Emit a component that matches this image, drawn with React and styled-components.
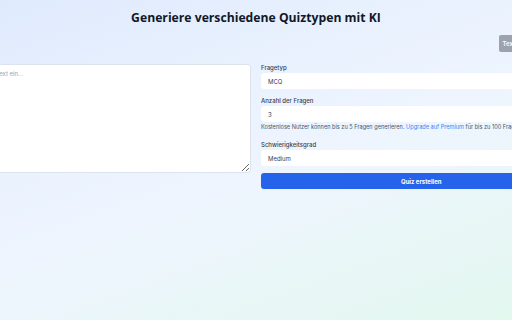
import React, {useState} from 'react';
import styled, {createGlobalStyle} from 'styled-components';

const GlobalStyle = createGlobalStyle`
    html, body {
        margin:0;
        padding:0;
    }
    body {
        font-family: Inter, "Noto Sans", sans-serif;
        overflow:hidden;
    }
`;

const Page = styled.div`
    min-height:320px;
    display:flex;
    justify-content:center;
    background: linear-gradient(160deg, #dfeafd 0%, #eaf2fe 35%, #eef5fe 55%, #e3f8ef 100%);
`;

const Container = styled.div`
    flex:0 0 651px;
    width:651px;
    display:flex;
    flex-direction:column;
    padding-top:8px;
    box-sizing:border-box;
`;

const Title = styled.h1`
    margin:0;
    text-align:center;
    font-family: "Open Sans", sans-serif;
    font-weight:700;
    font-size:12.2px;
    line-height:20px;
    color:#111827;
`;

const Toolbar = styled.div`
    display:flex;
    justify-content:flex-end;
    margin-top:7px;
`;

const GrayButton = styled.button`
    height:17px;
    width:83px;
    border:none;
    border-radius:2px;
    background:#9ca3af;
    color:#fff;
    font-family:Inter, sans-serif;
    font-weight:600;
    font-size:6px;
    padding:0 4px;
    text-align:left;
    cursor:pointer;
`;

const Columns = styled.div`
    display:grid;
    grid-template-columns:1fr 1fr;
    gap:10px;
    margin-top:12px;
    align-items:start;
`;

const TextArea = styled.textarea`
    width:100%;
    height:109px;
    box-sizing:border-box;
    border:1px solid #dde3ec;
    border-radius:3px;
    background:#fff;
    padding:5px 6px;
    font-family:Inter, sans-serif;
    font-size:6px;
    color:#374151;
    resize:vertical;
    outline:none;
    &::placeholder {
        color:#9ca3af;
    }
`;

const Form = styled.div`
    display:flex;
    flex-direction:column;
`;

const Field = styled.div`
    display:flex;
    flex-direction:column;
    margin-top:${props=>props.$top ?? 0}px;
    margin-bottom:${props=>props.$gap ?? 8}px;
`;

const Label = styled.label`
    font-size:6px;
    line-height:8px;
    font-weight:500;
    color:#374151;
    margin-bottom:1px;
`;

const Select = styled.div`
    height:16px;
    display:flex;
    align-items:center;
    padding:0 7px;
    background:#fff;
    border-radius:3px;
    font-size:6px;
    color:#374151;
`;

const Hint = styled.p`
    margin:1px 0 0;
    font-size:5.6px;
    line-height:8px;
    color:#4b5563;
    white-space:nowrap;
    a {
        color:#3b82f6;
        text-decoration:none;
    }
`;

const SubmitButton = styled.button`
    height:16px;
    border:none;
    border-radius:3px;
    background:#2563eb;
    color:#fff;
    font-family:Inter, sans-serif;
    font-weight:700;
    font-size:6px;
    cursor:pointer;
`;

const App = ()=>{
    const [text, setText] = useState("");

    return <Page>
        <GlobalStyle/>
        <Container>
            <Title>Generiere verschiedene Quiztypen mit KI</Title>
            <Toolbar>
                <GrayButton>Text löschen</GrayButton>
            </Toolbar>
            <Columns>
                <TextArea
                    value={text}
                    onChange={e=>setText(e.target.value)}
                    placeholder="Fügen Sie hier Ihren Text ein..."
                />
                <Form>
                    <Field>
                        <Label>Fragetyp</Label>
                        <Select>MCQ</Select>
                    </Field>
                    <Field $gap={0}>
                        <Label>Anzahl der Fragen</Label>
                        <Select>3</Select>
                    </Field>
                    <Hint>
                        Kostenlose Nutzer können bis zu 5 Fragen generieren. <a href="#">Upgrade auf Premium</a> für bis zu 100 Fragen.
                    </Hint>
                    <Field $top={10} $gap={7}>
                        <Label>Schwierigkeitsgrad</Label>
                        <Select>Medium</Select>
                    </Field>
                    <SubmitButton>Quiz erstellen</SubmitButton>
                </Form>
            </Columns>
        </Container>
    </Page>
}

export default App;
